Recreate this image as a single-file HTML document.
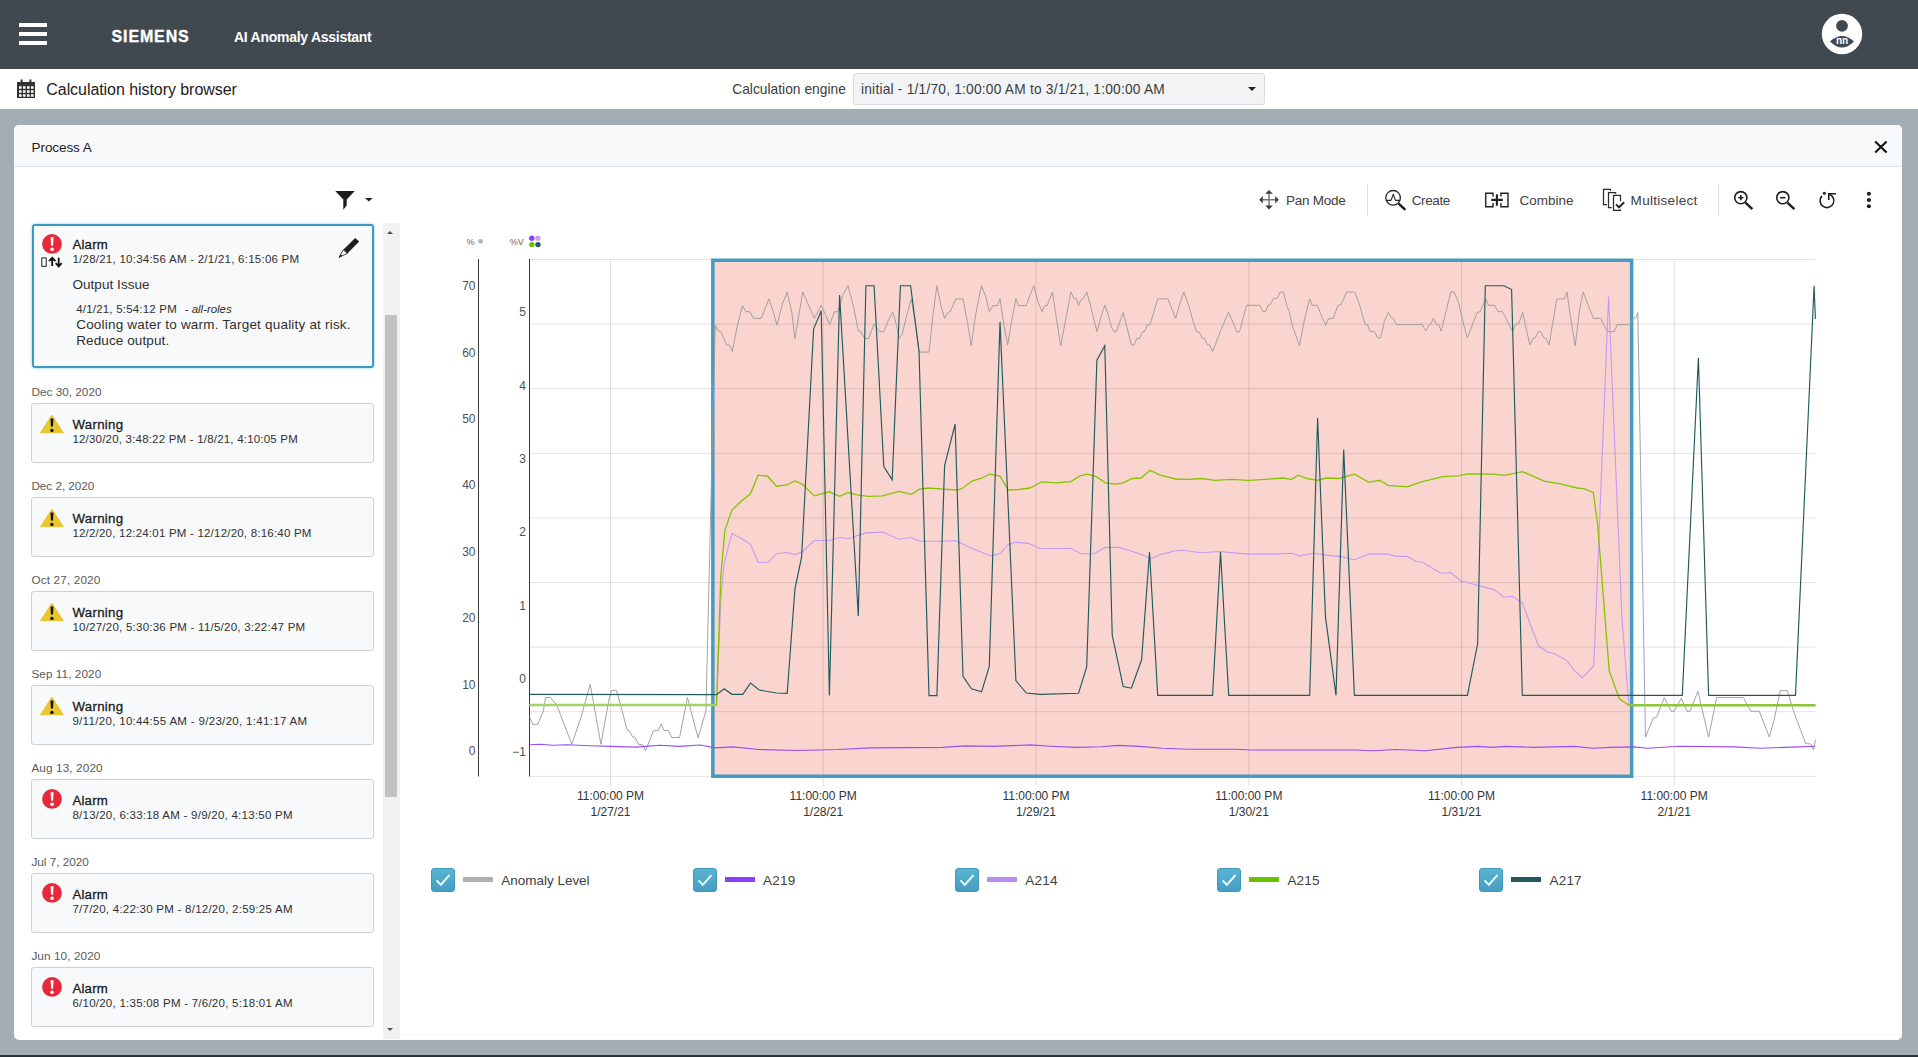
<!DOCTYPE html>
<html lang="en">
<head>
<meta charset="utf-8">
<title>AI Anomaly Assistant</title>
<style>
*{box-sizing:border-box;margin:0;padding:0}
html,body{width:1918px;height:1057px;overflow:hidden}
body{background:#a5adb4;font-family:"Liberation Sans",Arial,sans-serif;color:#222;position:relative;font-size:13px}
.abs{position:absolute}
.t{position:absolute;white-space:nowrap;line-height:1}
#hdr{position:absolute;left:0;top:0;width:1918px;height:69px;background:#414950}
#sub{position:absolute;left:0;top:69px;width:1918px;height:40px;background:#fffffe}
#bot{position:absolute;left:0;top:1055.4px;width:1918px;height:2px;background:#27333a}
#panel{position:absolute;left:14px;top:125px;width:1888px;height:914.7px;background:#fff;border-radius:5px;overflow:hidden}
#phead{position:absolute;left:0;top:0;width:1888px;height:42px;background:#f8f9fa;border-bottom:1px solid #dfe1e3}
.card{position:absolute;left:31px;width:343px;height:60px;background:#f8f9fa;border:1px solid #cfcfcf;border-radius:3px}
.card.sel{border:2px solid #3a9ac0;box-shadow:0 0 3px rgba(58,154,192,.6)}
.date{color:#5a5a5a;font-size:11.75px}
.ttl{font-size:13.25px;color:#1b1b1b;-webkit-text-stroke:.3px #1b1b1b}
.rng{font-size:11.5px;color:#303030}
</style>
</head>
<body>
<div id="hdr"></div>
<div id="sub"></div>
<div id="panel"><div id="phead"></div></div>
<div id="bot"></div>
<!--HEADER-->
<div class="abs" style="left:19px;top:23px;width:28px;height:4px;background:#fff"></div>
<div class="abs" style="left:19px;top:32px;width:28px;height:4px;background:#fff"></div>
<div class="abs" style="left:19px;top:41px;width:28px;height:4px;background:#fff"></div>
<div class="t" id="siemens" style="left:111.6px;top:29px;font-size:16px;font-weight:bold;color:#fff;-webkit-text-stroke:.35px #fff;letter-spacing:0.85px">SIEMENS</div>
<div class="t" id="appname" style="left:234px;top:30px;font-size:14px;font-weight:bold;color:#fff;letter-spacing:-0.27px">AI Anomaly Assistant</div>
<svg class="abs" style="left:1820px;top:12px" width="44" height="44" viewBox="0 0 44 44">
<circle cx="22" cy="22" r="20.2" fill="#fff"/>
<circle cx="22" cy="13.8" r="5.9" fill="#414950"/>
<path d="M10 29.5 Q22 18.5 34 29.5 Q22 41.5 10 29.5Z" fill="#414950"/>
<text x="22" y="32.4" font-size="10" font-weight="bold" fill="#fff" text-anchor="middle" font-family="Liberation Sans, sans-serif">nn</text>
</svg>

<!--SUB-->
<svg class="abs" style="left:17px;top:79px" width="19" height="20" viewBox="0 0 19 20">
<path d="M0 3h18v16H0z M2 7.2v2.6h2.6V7.2z M6 7.2v2.6h2.6V7.2z M10 7.2v2.6h2.6V7.2z M14 7.2v2.6h2.6V7.2z M2 11.2v2.6h2.6v-2.6z M6 11.2v2.6h2.6v-2.6z M10 11.2v2.6h2.6v-2.6z M14 11.2v2.6h2.6v-2.6z M2 15.2v2.6h2.6v-2.6z M6 15.2v2.6h2.6v-2.6z M10 15.2v2.6h2.6v-2.6z M14 15.2v2.6h2.6v-2.6z" fill="#333" fill-rule="evenodd"/>
<rect x="3.6" y="0.5" width="2" height="4" fill="#333"/><rect x="12.4" y="0.5" width="2" height="4" fill="#333"/>
</svg>
<div class="t" id="chb" style="left:46.3px;top:81.8px;font-size:16px;color:#222;letter-spacing:-0.06px">Calculation history browser</div>
<div class="t" id="ce" style="left:732.2px;top:83px;font-size:13.75px;color:#3c3c3c;letter-spacing:0.03px">Calculation engine</div>
<div class="abs" style="left:853px;top:73px;width:412px;height:32px;background:#f2f3f5;border:1px solid #d9dbde;border-radius:3px"></div>
<div class="t" id="seltxt" style="left:861px;top:83px;font-size:13.75px;color:#3c3c3c;letter-spacing:0.21px">initial - 1/1/70, 1:00:00 AM to 3/1/21, 1:00:00 AM</div>
<div class="abs" style="left:1248px;top:87px;width:0;height:0;border-left:4px solid transparent;border-right:4px solid transparent;border-top:4px solid #222"></div>

<!--LIST-->
<div class="t" id="ptitle" style="left:31.6px;top:141px;font-size:13.5px;color:#222;letter-spacing:-0.09px">Process A</div>
<svg class="abs" style="left:1873px;top:139px" width="16" height="16" viewBox="0 0 16 16"><path d="M2.2 2.6 L13.6 13.6 M13.6 2.6 L2.2 13.6" stroke="#111" stroke-width="2.1" fill="none"/></svg>
<svg class="abs" style="left:334px;top:189px" width="42" height="22" viewBox="0 0 42 22"><path d="M1.2 2.1H20.8L12.7 10.6V16.5L9.3 20.8V10.6Z" fill="#1e1e1e"/><path d="M31 8.9h7.7l-3.85 3.5z" fill="#1e1e1e"/></svg>
<div class="abs" style="left:383px;top:223px;width:17px;height:816px;background:#f1f1f1"></div>
<div class="abs" style="left:385px;top:315px;width:12px;height:482px;background:#c1c1c1"></div>
<div class="abs" style="left:386.7px;top:230.6px;width:0;height:0;border-left:3.8px solid transparent;border-right:3.8px solid transparent;border-bottom:3.7px solid #505050"></div>
<div class="abs" style="left:386.8px;top:1028px;width:0;height:0;border-left:3.8px solid transparent;border-right:3.8px solid transparent;border-top:3.8px solid #505050"></div>
<div class="abs" style="left:400px;top:1034px;width:1502px;height:1px;background:#f4f4f4"></div>
<div class="card sel" style="left:32px;top:224px;width:342px;height:144px"></div>
<svg class="abs" style="left:41px;top:233px" width="22" height="22" viewBox="0 0 22 22"><circle cx="11" cy="10.9" r="9.9" fill="#e7293b"/><path d="M9.6 4.2h3l-.5 8.6h-2z" fill="#fff"/><circle cx="11.1" cy="16.2" r="1.8" fill="#fff"/></svg>
<div class="t ttl" id="t0" style="left:72.4px;top:237.5px;letter-spacing:0.22px">Alarm</div>
<div class="t rng" id="r0" style="left:72.4px;top:254px;letter-spacing:0.25px">1/28/21, 10:34:56 AM - 2/1/21, 6:15:06 PM</div>
<svg class="abs" style="left:40px;top:256px" width="24" height="12" viewBox="0 0 24 12"><rect x="1.8" y="1.9" width="4.4" height="8.4" fill="none" stroke="#222" stroke-width="1"/><path d="M12.2 10V2.4M9 5.2l3.2-3.3 3.2 3.3M18.7 1.8v8.2M15.7 7.1l3 3.3 3-3.3" stroke="#111" stroke-width="1.8" fill="none"/></svg>
<div class="t" id="oi" style="left:72.4px;top:278px;font-size:13.5px;color:#303030;letter-spacing:0.06px">Output Issue</div>
<div class="t" id="cm1" style="left:76.2px;top:303.5px;font-size:11.5px;color:#303030;letter-spacing:0.2px">4/1/21, 5:54:12 PM</div><div class="t" id="cm1b" style="left:184.8px;top:303.5px;font-size:11.5px;color:#303030;font-style:italic;letter-spacing:-0.04px"><span style="font-style:normal">- </span>all-roles</div>
<div class="t" id="cm2" style="left:76.2px;top:317.7px;font-size:13.5px;color:#303030;letter-spacing:0.2px">Cooling water to warm. Target quality at risk.</div>
<div class="t" id="cm3" style="left:76.2px;top:333.6px;font-size:13.5px;color:#303030;letter-spacing:0.11px">Reduce output.</div>
<svg class="abs" style="left:337px;top:236px" width="24" height="24" viewBox="0 0 24 24"><path d="M18.2 1.9L22.2 5.5L10.3 17.4L6.3 13.8Z" fill="#1e1e1e"/><path d="M6.3 13.8L10.3 17.4L2 21.4Z" fill="#fff" stroke="#2a2a2a" stroke-width="0.9" stroke-linejoin="round"/><path d="M2 21.4l1.5-3.2 1.9 1.6z" fill="#1e1e1e"/></svg>
<div class="t date" id="d1" style="left:31.4px;top:386px;letter-spacing:0.02px">Dec 30, 2020</div>
<div class="card" style="top:403px"></div>
<svg class="abs" style="left:39px;top:413.5px" width="26" height="21" viewBox="0 0 26 21"><path d="M12.9 1.2 L24.3 18.7 H1.5 Z" fill="#e7c62f" stroke="#e7c62f" stroke-width="1" stroke-linejoin="round"/><path d="M11.5 4.6h2.9l-.4 7.8h-2.1z" fill="#151005"/><circle cx="12.9" cy="16.4" r="1.7" fill="#151005"/></svg>
<div class="t ttl" id="t1" style="left:72.4px;top:418px;letter-spacing:0.32px">Warning</div>
<div class="t rng" id="r1" style="left:72.4px;top:433.6px;letter-spacing:0.2px">12/30/20, 3:48:22 PM - 1/8/21, 4:10:05 PM</div>
<div class="t date" id="d2" style="left:31.4px;top:480px;letter-spacing:-0.04px">Dec 2, 2020</div>
<div class="card" style="top:497px"></div>
<svg class="abs" style="left:39px;top:507.5px" width="26" height="21" viewBox="0 0 26 21"><path d="M12.9 1.2 L24.3 18.7 H1.5 Z" fill="#e7c62f" stroke="#e7c62f" stroke-width="1" stroke-linejoin="round"/><path d="M11.5 4.6h2.9l-.4 7.8h-2.1z" fill="#151005"/><circle cx="12.9" cy="16.4" r="1.7" fill="#151005"/></svg>
<div class="t ttl" id="t2" style="left:72.4px;top:512px;letter-spacing:0.32px">Warning</div>
<div class="t rng" id="r2" style="left:72.4px;top:527.6px;letter-spacing:0.21px">12/2/20, 12:24:01 PM - 12/12/20, 8:16:40 PM</div>
<div class="t date" id="d3" style="left:31.4px;top:574px;letter-spacing:0.15px">Oct 27, 2020</div>
<div class="card" style="top:591px"></div>
<svg class="abs" style="left:39px;top:601.5px" width="26" height="21" viewBox="0 0 26 21"><path d="M12.9 1.2 L24.3 18.7 H1.5 Z" fill="#e7c62f" stroke="#e7c62f" stroke-width="1" stroke-linejoin="round"/><path d="M11.5 4.6h2.9l-.4 7.8h-2.1z" fill="#151005"/><circle cx="12.9" cy="16.4" r="1.7" fill="#151005"/></svg>
<div class="t ttl" id="t3" style="left:72.4px;top:606px;letter-spacing:0.32px">Warning</div>
<div class="t rng" id="r3" style="left:72.4px;top:621.6px;letter-spacing:0.24px">10/27/20, 5:30:36 PM - 11/5/20, 3:22:47 PM</div>
<div class="t date" id="d4" style="left:31.4px;top:668px;letter-spacing:0.07px">Sep 11, 2020</div>
<div class="card" style="top:685px"></div>
<svg class="abs" style="left:39px;top:695.5px" width="26" height="21" viewBox="0 0 26 21"><path d="M12.9 1.2 L24.3 18.7 H1.5 Z" fill="#e7c62f" stroke="#e7c62f" stroke-width="1" stroke-linejoin="round"/><path d="M11.5 4.6h2.9l-.4 7.8h-2.1z" fill="#151005"/><circle cx="12.9" cy="16.4" r="1.7" fill="#151005"/></svg>
<div class="t ttl" id="t4" style="left:72.4px;top:700px;letter-spacing:0.32px">Warning</div>
<div class="t rng" id="r4" style="left:72.4px;top:715.6px;letter-spacing:0.32px">9/11/20, 10:44:55 AM - 9/23/20, 1:41:17 AM</div>
<div class="t date" id="d5" style="left:31.4px;top:762px;letter-spacing:0.12px">Aug 13, 2020</div>
<div class="card" style="top:779px"></div>
<svg class="abs" style="left:41px;top:788px" width="22" height="22" viewBox="0 0 22 22"><circle cx="11" cy="10.9" r="9.9" fill="#e7293b"/><path d="M9.6 4.2h3l-.5 8.6h-2z" fill="#fff"/><circle cx="11.1" cy="16.2" r="1.8" fill="#fff"/></svg>
<div class="t ttl" id="t5" style="left:72.4px;top:794px;letter-spacing:0.22px">Alarm</div>
<div class="t rng" id="r5" style="left:72.4px;top:809.6px;letter-spacing:0.25px">8/13/20, 6:33:18 AM - 9/9/20, 4:13:50 PM</div>
<div class="t date" id="d6" style="left:31.4px;top:856px;letter-spacing:0.0px">Jul 7, 2020</div>
<div class="card" style="top:873px"></div>
<svg class="abs" style="left:41px;top:882px" width="22" height="22" viewBox="0 0 22 22"><circle cx="11" cy="10.9" r="9.9" fill="#e7293b"/><path d="M9.6 4.2h3l-.5 8.6h-2z" fill="#fff"/><circle cx="11.1" cy="16.2" r="1.8" fill="#fff"/></svg>
<div class="t ttl" id="t6" style="left:72.4px;top:888px;letter-spacing:0.22px">Alarm</div>
<div class="t rng" id="r6" style="left:72.4px;top:903.6px;letter-spacing:0.25px">7/7/20, 4:22:30 PM - 8/12/20, 2:59:25 AM</div>
<div class="t date" id="d7" style="left:31.4px;top:950px;letter-spacing:0.09px">Jun 10, 2020</div>
<div class="card" style="top:967px"></div>
<svg class="abs" style="left:41px;top:976px" width="22" height="22" viewBox="0 0 22 22"><circle cx="11" cy="10.9" r="9.9" fill="#e7293b"/><path d="M9.6 4.2h3l-.5 8.6h-2z" fill="#fff"/><circle cx="11.1" cy="16.2" r="1.8" fill="#fff"/></svg>
<div class="t ttl" id="t7" style="left:72.4px;top:982px;letter-spacing:0.22px">Alarm</div>
<div class="t rng" id="r7" style="left:72.4px;top:997.6px;letter-spacing:0.25px">6/10/20, 1:35:08 PM - 7/6/20, 5:18:01 AM</div>
<!--TOOLBAR-->
<svg class="abs" style="left:1258px;top:189px" width="22" height="22" viewBox="0 0 22 22"><path d="M11 4V17.4M4 10.7H18" stroke="#777" stroke-width="1.5" fill="none"/><path d="M11 0.9l3.8 3.9H7.2zM11 20.5l3.8-3.9H7.2zM1.2 10.7l3.6-3.7v7.4zM20.8 10.7l-3.6-3.7v7.4z" fill="#3c3c3c"/></svg>
<div class="t" id="tb1" style="left:1286px;top:193.5px;font-size:13.5px;color:#404040;letter-spacing:-0.26px">Pan Mode</div>
<div class="abs" style="left:1367px;top:184px;width:1px;height:32px;background:#dcdcdc"></div>
<svg class="abs" style="left:1384px;top:189px" width="24" height="24" viewBox="0 0 24 24"><circle cx="9.1" cy="8.8" r="7.3" fill="none" stroke="#2a2a2a" stroke-width="1.3"/><path d="M2.2 11.4H7L9.3 5.2L11.4 11.4H16" fill="none" stroke="#2a2a2a" stroke-width="1.1" stroke-linejoin="round"/><path d="M14.6 14.6l6.8 6.2" stroke="#1e1e1e" stroke-width="2.5" fill="none"/></svg>
<div class="t" id="tb2" style="left:1411.7px;top:193.5px;font-size:13.5px;color:#404040;letter-spacing:-0.37px">Create</div>
<svg class="abs" style="left:1484px;top:191px" width="26" height="18" viewBox="0 0 26 18"><path d="M9 5.6V2.2H1.7V15.7H9V12.1M16.9 5.6V2.2H24V15.7H16.9V12.1" fill="none" stroke="#222" stroke-width="1.4"/><path d="M7.3 8.9H18.8M12.9 3.2V14.7" stroke="#222" stroke-width="2.1" fill="none"/></svg>
<div class="t" id="tb3" style="left:1519.5px;top:193.5px;font-size:13.5px;color:#404040;letter-spacing:0.01px">Combine</div>
<svg class="abs" style="left:1601px;top:187px" width="26" height="26" viewBox="0 0 26 26"><path d="M9.4 3.8V2.4H2.5V17.6H5.9M14.6 6.7V5.5H7.5V20.5H10.7M19.5 14.2V8.4H12.5V23.4H19.5V22.2" fill="none" stroke="#2a2a2a" stroke-width="1.25"/><path d="M15 17.3l3 3 5.2-5" fill="none" stroke="#222" stroke-width="1.9"/></svg>
<div class="t" id="tb4" style="left:1630.6px;top:193.5px;font-size:13.5px;color:#404040;letter-spacing:0.29px">Multiselect</div>
<div class="abs" style="left:1718px;top:184px;width:1px;height:32px;background:#dcdcdc"></div>
<svg class="abs" style="left:1733px;top:190px" width="22" height="22" viewBox="0 0 22 22"><circle cx="7.8" cy="7.7" r="6.1" fill="none" stroke="#1e1e1e" stroke-width="1.6"/><path d="M5.2 7.7h5.2M7.8 5.1v5.2" stroke="#1e1e1e" stroke-width="1.6"/><path d="M12.4 12.6l7 6.5" stroke="#1e1e1e" stroke-width="2.5"/></svg>
<svg class="abs" style="left:1775px;top:190px" width="22" height="22" viewBox="0 0 22 22"><circle cx="7.8" cy="7.7" r="6.1" fill="none" stroke="#1e1e1e" stroke-width="1.6"/><path d="M5.2 7.7h5.2" stroke="#1e1e1e" stroke-width="1.6"/><path d="M12.4 12.6l7 6.5" stroke="#1e1e1e" stroke-width="2.5"/></svg>
<svg class="abs" style="left:1816px;top:189px" width="22" height="22" viewBox="0 0 22 22"><path d="M12.7 5A6.9 6.9 0 1 1 6 6.9" fill="none" stroke="#1e1e1e" stroke-width="1.6"/><path d="M12.8 11V4.8H19.9" fill="none" stroke="#1e1e1e" stroke-width="1.6"/><circle cx="8.3" cy="4.2" r="1.5" fill="#1e1e1e"/></svg>
<svg class="abs" style="left:1865px;top:190px" width="8" height="20" viewBox="0 0 8 20"><circle cx="3.9" cy="3.75" r="2.05" fill="#1e1e1e"/><circle cx="3.9" cy="10" r="2.05" fill="#1e1e1e"/><circle cx="3.9" cy="16.25" r="2.05" fill="#1e1e1e"/></svg>
<!--CHART-->
<svg class="abs" style="left:420px;top:225px" width="1480" height="610" viewBox="420 225 1480 610" font-family="Liberation Sans, sans-serif">
<rect x="712.85" y="260.25" width="918.8" height="516" fill="#fad5cf"/>
<path d="M529.5 259.5H1815.4 M529.5 324.1H1815.4 M529.5 388.7H1815.4 M529.5 453.3H1815.4 M529.5 517.9H1815.4 M529.5 582.5H1815.4 M529.5 647.1H1815.4 M529.5 711.7H1815.4 M529.5 776.3H1815.4 M610.5 259.5V786 M823.2 259.5V786 M1036.0 259.5V786 M1248.8 259.5V786 M1461.5 259.5V786 M1674.2 259.5V786" stroke="#000" stroke-opacity=".115" stroke-width="1" fill="none"/>
<path d="M478.5 259V776.5M529.5 259V776.5" stroke="#3a3a3a" stroke-width="1" fill="none"/>
<rect x="712.85" y="260.25" width="918.8" height="516" fill="none" stroke="#469bc1" stroke-width="3.5"/>
<polyline points="529.5,716.6 532.8,724.4 537.7,724.4 543.4,710.9 545.5,697.5 550.5,697.5 556.9,705.3 571.8,744.3 581,717.3 590.2,684.3 600.9,744.3 608.7,701 611.5,690.4 616.5,690.4 622.2,710.9 627.1,730.1 629.3,730.8 632.8,737.2 634.9,737.2 638.5,744.3 642.7,744.7 645.6,750.7 653.4,730.8 658.3,730.5 661.2,724 664,730.5 668.3,730.5 671.8,737.5 679.6,737.5 687.4,697.5 698.1,737.9 705.9,710.9 715.2,325.2 717.8,330.9 720.8,331.6 726.7,344.9 729.3,344.9 732.3,351.6 737.4,325.2 742.5,305.6 745.9,311.7 749.7,311.7 753.5,318.3 761.2,318.3 768.9,298.9 771.9,307.4 777,325.2 782.1,304.8 787.2,292 791.8,312.5 794.9,338.5 799.5,311.2 802.8,292 808.4,304.8 814.3,318.3 821.2,305.3 825.1,313.7 829.6,324.7 834.5,311.7 837.8,311.7 842.9,294.6 848,285.7 853.1,304.8 858.3,330.9 860.8,331.6 864.6,338.5 868.5,338.5 874.1,324 879.5,331.6 883.8,331.6 888.9,318.9 892.7,312.2 896.6,325.2 899.1,338.5 902.2,334.2 906.8,315 911.4,298.9 915,321.4 919,352.1 929,352.1 933.1,313.7 936.9,285.7 941.3,307.4 944.6,318.3 947.7,312.5 950.2,311.7 955.8,298.9 963,298.9 967.3,321.4 971.2,345.7 975.8,313.7 981.4,285.7 986,297.1 989.3,311.7 992.9,305.6 997.5,305.6 1000,298.4 1003.9,325.2 1007.7,344.9 1011.5,321.4 1015.9,298.9 1018.4,305.6 1026.1,305.6 1030.7,293.3 1033.8,285.7 1037.7,301 1042,311.7 1044.6,305.6 1047.1,305.6 1052.5,292 1056.8,321.4 1060.7,345.7 1065.8,318.9 1070.9,292 1073.9,298.4 1076.5,298.9 1078.5,305.3 1081.1,299.7 1083.6,298.4 1086.7,292 1091.3,308.6 1096.9,331.6 1101.5,315 1104.8,305.3 1107.9,313.7 1111.7,327.8 1114.3,332.1 1116.3,331.6 1123.2,312.5 1127.1,327.8 1131.4,344.9 1134.2,344.9 1136.8,338.5 1139.3,338.5 1142.4,332.1 1144.9,331.1 1147,325.2 1150.1,324.5 1153.9,311.7 1157.7,298.9 1167.9,298.9 1175.6,318.3 1179.4,305.3 1183.8,292 1188.9,306.1 1193.5,322.7 1196.5,331.6 1199.1,332.1 1202.4,338 1204.5,338.5 1207.5,344.9 1209.6,344.9 1212.6,351.6 1220.3,331.6 1228.5,312.2 1233.1,322.7 1236.9,332.1 1239.5,331.6 1242.8,318.9 1246.6,305.3 1259.9,305.3 1263,311.7 1265.5,311.7 1268.1,305.3 1270.1,304.8 1273.2,298.9 1277.3,298.4 1280.3,292 1283.4,292 1286.7,305.3 1289.3,311.7 1291.8,324 1299.5,345.7 1304.6,318.9 1309.7,298.9 1312.2,305.3 1317.4,305.3 1321.7,316.3 1325.8,325.2 1328.3,318.9 1333.4,318.3 1337.8,305.6 1340.9,304.8 1346.7,292 1354.4,292 1355,292.8 1358.8,302.3 1365.2,324.5 1367.8,325.2 1369.8,331.1 1374.2,331.6 1378,338 1380.5,338 1384.4,321.4 1388.2,312.5 1391.3,317.6 1393.3,318.3 1396.6,324.7 1418.9,324.7 1421.9,324 1425.8,331.1 1429.1,324.7 1430.9,324 1433.4,318.3 1436.7,324.7 1438.8,324.7 1441.1,331.1 1445.7,312.5 1450.8,292 1454.1,292 1458.4,302.3 1463.6,324 1467.4,338 1477.1,312.5 1480.2,311.7 1485.8,298.9 1488.6,305.3 1494.7,305.3 1498,311.7 1502.4,311.7 1508.3,322.7 1512.6,331.6 1515.4,324.5 1518.5,324 1522.8,312.5 1526.6,330.4 1530,344.9 1533,338.5 1535.1,338 1538.4,331.6 1540.7,331.6 1544,338 1546.1,338.5 1549.1,344.9 1553,321.4 1556.8,298.9 1564.5,298.9 1567,292 1569.6,311.2 1575.2,345.7 1579.8,308.6 1583.1,292 1588,304.8 1593.3,318.3 1600.7,318.3 1604,325.2 1607.4,331.6 1614.3,331.6 1617.3,324.7 1629.6,324.7 1633.4,318.3 1636,317.6 1637.8,312.5 1645.5,737.2 1653.2,718.1 1656.5,717.3 1664.2,697.6 1671.1,711.2 1674.2,711.2 1681.3,698.4 1686.9,711.2 1690.2,711.2 1697.9,691.2 1708.6,737.2 1716.6,697.6 1743.4,697.6 1750.8,711.2 1759.2,711.2 1769.4,737.2 1774.5,718.1 1780.2,690.7 1787.3,690.7 1793.7,711.7 1805.7,743.6 1811.1,744.1 1813.6,750 1815.4,739.8" fill="none" stroke="#999" stroke-width="0.9"/>
<polyline points="529.5,705.3 716.5,705.3 720.8,599.3 724.2,563.5 731.8,533.6 742.8,539.3 750.5,544.4 758.1,562.3 768.3,562.3 776.5,553.8 786.7,552.5 794.9,554.6 802.1,552 814.3,540.5 829.4,540.5 839.6,537.5 848,538.8 865.9,532.9 882.5,532.1 899.1,539.3 910.6,537.5 919.6,541.3 942.5,541.3 955.3,540.5 971.9,548.2 990.6,555.9 1000,553.8 1008.2,544.4 1015.3,542.3 1026.8,543.1 1030,543.9 1040.2,548.7 1070.9,548.2 1081.1,553.8 1093.9,553.8 1105.4,547.4 1119.4,547.4 1132.2,551.5 1142.4,554.6 1150.1,558.9 1160.3,554.6 1175.6,550.8 1183.3,550.2 1201.1,552.8 1219,551.5 1248.4,554.1 1275.2,554.1 1291.8,553.3 1299.5,555.9 1313.5,553.3 1326.3,555.1 1341.6,556.6 1354.4,559.7 1369,554.1 1388.2,554.1 1395.9,556.4 1407.4,556.4 1416.3,561.5 1422.7,562.3 1440.6,573.2 1450.8,572.7 1461,580.9 1477.6,585.2 1494.2,589.6 1503.9,597.2 1512.1,596.2 1522.3,602.6 1538.4,645.8 1547.8,652.2 1554.2,653.4 1567,660.6 1574.2,670.3 1582.3,677.7 1593.8,665.7 1608.6,296.4 1621.9,617 1628.8,705.3 1815.4,705.3" fill="none" stroke="#c39cf2" stroke-width="1.1"/>
<polyline points="529.5,704.8 716.5,705.3 720.8,576.3 724.9,530.3 731.8,510.4 740.8,501.5 750.5,493.8 758.1,475.2 767.6,476.2 776.5,486.2 786.7,484.9 794.9,481 802.1,484.1 814.3,495.9 829.4,491.8 839.6,496.4 848,492.5 858.3,495.1 868.5,496.4 882.5,495.9 899.1,491.3 911.4,494.3 919.6,489.2 928.5,488 942.5,489.2 957.9,490 963,488 971.9,481 980.9,478.5 989.8,474.2 1000,476.2 1008.2,490 1019.2,489.5 1030,488 1041.5,481.8 1055.5,482.8 1070.9,481.6 1079.8,475.9 1087.5,474.2 1096.4,476.7 1105.4,482.8 1115.6,484.1 1123.2,482.8 1132.2,478.5 1141.1,478 1150.1,470.3 1160.3,475.2 1175.6,479 1188.4,479.3 1201.1,478.5 1215.2,480.3 1231.8,479.3 1248.4,480.3 1265,479.3 1282.9,478 1291.8,479.3 1298.2,475.2 1307.2,478.5 1317.4,480.3 1326.3,478 1339.1,478.5 1354.4,474.2 1369,482.3 1379.3,480.3 1388.2,485.4 1407.4,486.9 1421.4,481.8 1443.1,476.7 1458.4,475.9 1467.4,473.9 1492.9,474.2 1504.4,475.4 1522.3,471.6 1531.2,475.4 1544,481.1 1559.3,483.6 1577.2,488 1583.6,488.7 1593.3,492.5 1597.7,525 1609.2,670.8 1619.4,698.9 1628.8,705.3 1815.4,705.3" fill="none" stroke="#86c400" stroke-width="1.3"/>
<path d="M529.5 705H716" stroke="#a3d266" stroke-width="2.6" fill="none"/><path d="M1629 705.3H1815.4" stroke="#8cc63c" stroke-width="2.4" fill="none"/>
<polyline points="529.5,744.7 539.9,744.3 552.6,745.3 566.8,744.7 590.9,745.7 610.8,746.4 636.3,747.1 647.7,746.1 660.5,745.3 678.9,746.4 700.2,745 715.2,747.9 733.1,746.9 758.6,749.5 797,750.5 837.8,749.5 871,747.9 942.5,747.4 965.5,745.9 993.6,746.4 1030,744.9 1050.4,746.2 1076,747.4 1101.5,746.7 1118.1,745.4 1139.8,746.4 1162.8,748.2 1188.4,749.2 1234.3,749.2 1252.2,750 1355,750 1372.9,750.8 1395.9,749.5 1425.2,750.8 1457.2,747.4 1477.6,746.4 1492.9,747.4 1505.7,746.4 1533.8,747.4 1574.7,746.4 1592.5,748.2 1610.4,747.4 1633.4,746.9 1647.5,748.2 1679.4,746.2 1734.9,746.9 1760.5,748.2 1798.8,746.9 1815.4,746.2" fill="none" stroke="#9a4cf5" stroke-width="1.1"/>
<polyline points="529.5,694.3 716.5,694.6 724.2,688.7 731.8,694.3 742.8,694.3 750.5,683.1 759.2,690 776.5,693 787.2,693.3 794.9,589.1 801.6,557.1 813.6,329.1 821.2,310.7 829.4,695.6 839.6,295.1 858.3,615.9 865.9,285.7 874.1,285.7 883.8,466.5 892.2,479.8 900.4,285.7 910.6,285.7 919,350.8 929,695.6 936.9,695.6 944.6,465.7 955.1,424.1 963,676.4 971.4,688.7 981.6,691.8 989.3,666.2 1000,321.9 1015.9,680.5 1026.3,693 1040.2,694.3 1078.5,693.3 1086.7,667 1096.9,360.2 1104.8,345.7 1112.2,635 1123.2,686.6 1131.4,688.2 1141.6,659.8 1149.5,552 1157.7,695.3 1212.6,695.3 1220.5,552 1228.7,695.3 1309.7,695.3 1317.6,418 1325.5,617.2 1336,695.3 1343.7,449.6 1354.4,695.3 1467.4,695.3 1477.6,644 1485.3,285.7 1503.9,285.7 1511.6,289.5 1522.3,695.3 1682.3,695.3 1698.4,357.7 1708.6,695.3 1795.5,695.3 1814.1,285.7 1815.4,319" fill="none" stroke="#1f5a5c" stroke-width="1.15" stroke-linejoin="miter"/>
<text x="475.5" y="290.2" text-anchor="end" font-size="12" fill="#505050">70</text>
<text x="475.5" y="356.6" text-anchor="end" font-size="12" fill="#505050">60</text>
<text x="475.5" y="423.0" text-anchor="end" font-size="12" fill="#505050">50</text>
<text x="475.5" y="489.4" text-anchor="end" font-size="12" fill="#505050">40</text>
<text x="475.5" y="555.8" text-anchor="end" font-size="12" fill="#505050">30</text>
<text x="475.5" y="622.2" text-anchor="end" font-size="12" fill="#505050">20</text>
<text x="475.5" y="688.6" text-anchor="end" font-size="12" fill="#505050">10</text>
<text x="475.5" y="755.0" text-anchor="end" font-size="12" fill="#505050">0</text>
<text x="526" y="316.4" text-anchor="end" font-size="12" fill="#505050">5</text>
<text x="526" y="389.7" text-anchor="end" font-size="12" fill="#505050">4</text>
<text x="526" y="463.0" text-anchor="end" font-size="12" fill="#505050">3</text>
<text x="526" y="536.3" text-anchor="end" font-size="12" fill="#505050">2</text>
<text x="526" y="609.6" text-anchor="end" font-size="12" fill="#505050">1</text>
<text x="526" y="682.9" text-anchor="end" font-size="12" fill="#505050">0</text>
<text x="526" y="756.2" text-anchor="end" font-size="12" fill="#505050">−1</text>
<text x="610.5" y="800.4" text-anchor="middle" font-size="12" fill="#333">11:00:00 PM</text>
<text x="610.5" y="816.3" text-anchor="middle" font-size="12" fill="#333">1/27/21</text>
<text x="823.2" y="800.4" text-anchor="middle" font-size="12" fill="#333">11:00:00 PM</text>
<text x="823.2" y="816.3" text-anchor="middle" font-size="12" fill="#333">1/28/21</text>
<text x="1036.0" y="800.4" text-anchor="middle" font-size="12" fill="#333">11:00:00 PM</text>
<text x="1036.0" y="816.3" text-anchor="middle" font-size="12" fill="#333">1/29/21</text>
<text x="1248.8" y="800.4" text-anchor="middle" font-size="12" fill="#333">11:00:00 PM</text>
<text x="1248.8" y="816.3" text-anchor="middle" font-size="12" fill="#333">1/30/21</text>
<text x="1461.5" y="800.4" text-anchor="middle" font-size="12" fill="#333">11:00:00 PM</text>
<text x="1461.5" y="816.3" text-anchor="middle" font-size="12" fill="#333">1/31/21</text>
<text x="1674.2" y="800.4" text-anchor="middle" font-size="12" fill="#333">11:00:00 PM</text>
<text x="1674.2" y="816.3" text-anchor="middle" font-size="12" fill="#333">2/1/21</text>
<text x="466.5" y="244.5" font-size="9" fill="#666">%</text><circle cx="480.6" cy="241.3" r="2.4" fill="#b4b4b4"/>
<text x="509.8" y="244.5" font-size="9" fill="#666">%V</text>
<circle cx="531.8" cy="238.3" r="2.7" fill="#8a3ffc"/><rect x="535.4" y="235.8" width="5" height="5" rx="1.5" fill="#c8a2f4"/><circle cx="531.8" cy="244.6" r="2.7" fill="#6cc000"/><circle cx="538" cy="244.6" r="2.7" fill="#1f5a5c"/>
</svg>
<!--LEGEND-->
<div class="abs" style="left:431.1px;top:868px;width:24px;height:24px;border-radius:3px;background:linear-gradient(#58b5d1,#469dc3);border:1px solid #4097bb"></div>
<svg class="abs" style="left:431.1px;top:868px" width="24" height="24" viewBox="0 0 24 24"><path d="M5.6 12.4l4.2 4.4 8.6-9.6" fill="none" stroke="#fff" stroke-width="1.9"/></svg>
<div class="abs" style="left:463.1px;top:877px;width:30px;height:4.5px;background:#b0b0b0"></div>
<div class="t" id="lg0" style="left:501.2px;top:873.5px;font-size:13.5px;color:#404040;letter-spacing:-0.01px">Anomaly Level</div>
<div class="abs" style="left:693.2px;top:868px;width:24px;height:24px;border-radius:3px;background:linear-gradient(#58b5d1,#469dc3);border:1px solid #4097bb"></div>
<svg class="abs" style="left:693.2px;top:868px" width="24" height="24" viewBox="0 0 24 24"><path d="M5.6 12.4l4.2 4.4 8.6-9.6" fill="none" stroke="#fff" stroke-width="1.9"/></svg>
<div class="abs" style="left:725.2px;top:877px;width:30px;height:4.5px;background:#8a3ffc"></div>
<div class="t" id="lg1" style="left:763.1px;top:873.5px;font-size:13.5px;color:#404040;letter-spacing:0.19px">A219</div>
<div class="abs" style="left:955.2px;top:868px;width:24px;height:24px;border-radius:3px;background:linear-gradient(#58b5d1,#469dc3);border:1px solid #4097bb"></div>
<svg class="abs" style="left:955.2px;top:868px" width="24" height="24" viewBox="0 0 24 24"><path d="M5.6 12.4l4.2 4.4 8.6-9.6" fill="none" stroke="#fff" stroke-width="1.9"/></svg>
<div class="abs" style="left:987.2px;top:877px;width:30px;height:4.5px;background:#bb8cf0"></div>
<div class="t" id="lg2" style="left:1025.3px;top:873.5px;font-size:13.5px;color:#404040;letter-spacing:0.19px">A214</div>
<div class="abs" style="left:1217.3px;top:868px;width:24px;height:24px;border-radius:3px;background:linear-gradient(#58b5d1,#469dc3);border:1px solid #4097bb"></div>
<svg class="abs" style="left:1217.3px;top:868px" width="24" height="24" viewBox="0 0 24 24"><path d="M5.6 12.4l4.2 4.4 8.6-9.6" fill="none" stroke="#fff" stroke-width="1.9"/></svg>
<div class="abs" style="left:1249.3px;top:877px;width:30px;height:4.5px;background:#6cc000"></div>
<div class="t" id="lg3" style="left:1287.4px;top:873.5px;font-size:13.5px;color:#404040;letter-spacing:0.19px">A215</div>
<div class="abs" style="left:1479.4px;top:868px;width:24px;height:24px;border-radius:3px;background:linear-gradient(#58b5d1,#469dc3);border:1px solid #4097bb"></div>
<svg class="abs" style="left:1479.4px;top:868px" width="24" height="24" viewBox="0 0 24 24"><path d="M5.6 12.4l4.2 4.4 8.6-9.6" fill="none" stroke="#fff" stroke-width="1.9"/></svg>
<div class="abs" style="left:1511.4px;top:877px;width:30px;height:4.5px;background:#1f5a5c"></div>
<div class="t" id="lg4" style="left:1549.5px;top:873.5px;font-size:13.5px;color:#404040;letter-spacing:0.19px">A217</div>
</body>
</html>
